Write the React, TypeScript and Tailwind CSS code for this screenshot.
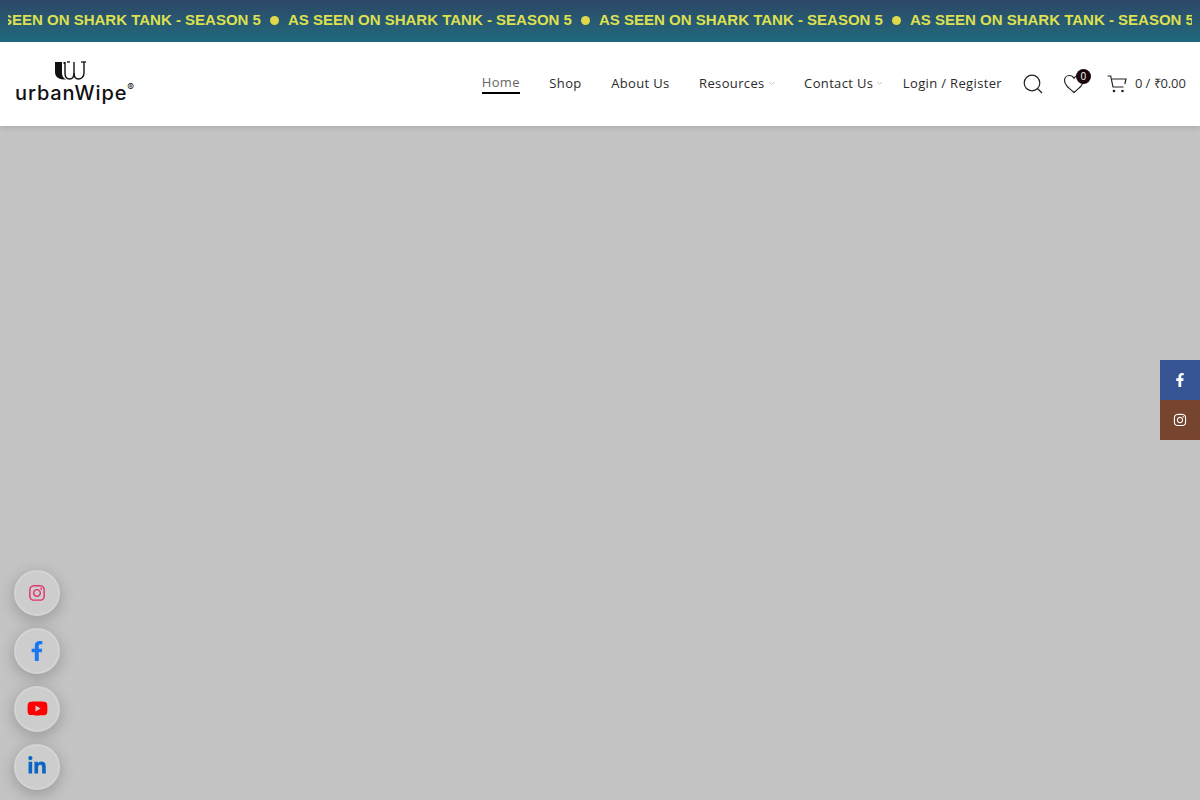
import { FaFacebookF, FaInstagram, FaLinkedinIn, FaYoutube } from 'react-icons/fa'

const marquee = [0, 1, 2, 3, 4]

function Logo() {
  return (
    <div className="mb-[2px] flex w-[122px] flex-col">
      <svg width="32" height="19" viewBox="0 0 32 19" className="ml-[39px] block">
        <path d="M1 1h7v11c0 3 1 5 4 6.500C6 18.500 1 17 1 11z" fill="#111" />
        <rect x="9.500" y="1" width="1.500" height="2" fill="#111" />
        <path d="M11 1v11c0 4 2 6 4.500 6S20 16 20 12V1" fill="none" stroke="#111" strokeWidth="1.400" />
        <path d="M20 12c0 4 2 6 4.500 6S30 16 30 12V1" fill="none" stroke="#111" strokeWidth="1.400" />
        <path d="M27 1h5" stroke="#111" strokeWidth="1.300" />
        <path d="M13 1h3" stroke="#111" strokeWidth="1.300" />
      </svg>
      <div className="flex items-start font-['Inter',sans-serif] text-[20px] font-medium leading-[26px] tracking-[0.9px] text-[#111]">
        urbanWipe
        <span className="mt-[1px] text-[10px] font-normal leading-[12px] tracking-normal">®</span>
      </div>
    </div>
  )
}

function NavItem({ label, active, caret, spaced }: { label: string; active?: boolean; caret?: boolean; spaced?: boolean }) {
  return (
    <a className={spaced ? 'relative mr-[10px] flex h-[20px] items-center' : 'relative flex h-[20px] items-center'}>
      <span className={active ? 'border-b-2 border-black leading-[20px] text-[#666]' : 'leading-[20px] text-[#2a2a2a]'}>{label}</span>
      {caret && (
        <svg width="7" height="5" viewBox="0 0 7 5" className="absolute -right-[10px] top-[8px]">
          <path d="M1 1l2.500 2.500L6 1" fill="none" stroke="#c9c9c9" strokeWidth="1" />
        </svg>
      )}
    </a>
  )
}

function FloatButton({ children }: { children: React.ReactNode }) {
  return (
    <div className="flex h-[46px] w-[46px] items-center justify-center rounded-full border-2 border-[#d4d4d4] bg-[#cdcdcd] shadow-[0_4px_16px_rgba(0,0,0,0.24)]">
      {children}
    </div>
  )
}

export default function App() {
  return (
    <div className="relative h-[800px] w-[1200px] overflow-hidden bg-[#c4c4c4]">
      {/* Top marquee */}
      <div className="h-[42px] bg-gradient-to-b from-[#2b4766] to-[#1f6a7d] px-2 pb-[2px]">
        <div className="h-full overflow-hidden">
          <div className="-ml-[31px] flex h-full w-[1700px] items-center gap-[9px] font-['Liberation_Sans',Arial,sans-serif] text-[15px] font-bold text-[#dde04f]">
            {marquee.map((i) => (
              <div key={i} className="flex shrink-0 items-center gap-[9px]">
                <span className="w-[284px] whitespace-nowrap">AS SEEN ON SHARK TANK - SEASON 5</span>
                <span className="h-[9px] w-[9px] rounded-full bg-[#dfd84a]" />
              </div>
            ))}
          </div>
        </div>
      </div>

      {/* Header */}
      <header className="relative z-10 flex h-[84px] items-center justify-between bg-white pl-[15px] pr-[14px] shadow-[0_2px_6px_rgba(0,0,0,0.12)]">
        <Logo />
        <div className="flex items-center font-['Open_Sans',sans-serif] text-[13px] font-medium tracking-[0.35px] text-[#333]">
          <nav className="mb-[2px] flex items-center gap-[29.5px]">
            <NavItem label="Home" active />
            <NavItem label="Shop" />
            <NavItem label="About Us" />
            <NavItem label="Resources" caret spaced />
            <NavItem label="Contact Us" caret />
            <NavItem label="Login / Register" />
          </nav>
          <svg width="20" height="20" viewBox="0 0 20 20" className="ml-[21px]">
            <circle cx="9" cy="9" r="7.800" fill="none" stroke="#222" strokeWidth="1.200" />
            <path d="M14.500 14.500l4.500 4.500" stroke="#222" strokeWidth="1.200" />
          </svg>
          <div className="relative ml-[20px] h-[20px] w-[22px]">
            <svg width="22" height="20" viewBox="0 0 22 20">
              <path
                d="M11 18.500C5 13.500 1.500 10.500 1.500 6.500C1.500 3.500 3.700 1.500 6.300 1.500C8.200 1.500 10 2.500 11 4.300C12 2.500 13.800 1.500 15.700 1.500C18.300 1.500 20.500 3.500 20.500 6.500C20.500 10.500 17 13.500 11 18.500Z"
                fill="none"
                stroke="#222"
                strokeWidth="1.200"
              />
            </svg>
            <span className="absolute -right-[6px] -top-[5px] flex h-[15px] w-[15px] items-center justify-center rounded-full bg-[#1a0508] text-[10px] font-normal text-white">
              0
            </span>
          </div>
          <svg width="20" height="18" viewBox="0 0 20 18" className="ml-[22px]">
            <path d="M0.500 1h3.200l2.300 11h10.500M5 4h14l-1.200 5" fill="none" stroke="#222" strokeWidth="1.200" />
            <circle cx="7" cy="16" r="1.300" fill="#222" />
            <circle cx="15.500" cy="16" r="1.300" fill="#222" />
          </svg>
          <span className="ml-[8px] w-[51px] whitespace-nowrap font-normal tracking-[-0.1px] text-[#333]">0 / ₹0.00</span>
        </div>
      </header>

      {/* Right social bar */}
      <div className="absolute right-0 top-[360px] flex w-[40px] flex-col text-white">
        <div className="flex h-[40px] items-center justify-center bg-[#365493]">
          <FaFacebookF size={14} />
        </div>
        <div className="flex h-[40px] items-center justify-center bg-[#774430]">
          <FaInstagram size={14} />
        </div>
      </div>

      {/* Floating social buttons */}
      <div className="absolute left-[14px] top-[570px] flex flex-col gap-[12px]">
        <FloatButton>
          <FaInstagram size={18} className="text-[#e1306c]" />
        </FloatButton>
        <FloatButton>
          <FaFacebookF size={20} className="text-[#1877f2]" />
        </FloatButton>
        <FloatButton>
          <FaYoutube size={21} className="-mt-[2px] text-[#ff0000]" />
        </FloatButton>
        <FloatButton>
          <FaLinkedinIn size={20} className="-mt-[2px] text-[#0a66c2]" />
        </FloatButton>
      </div>
    </div>
  )
}
